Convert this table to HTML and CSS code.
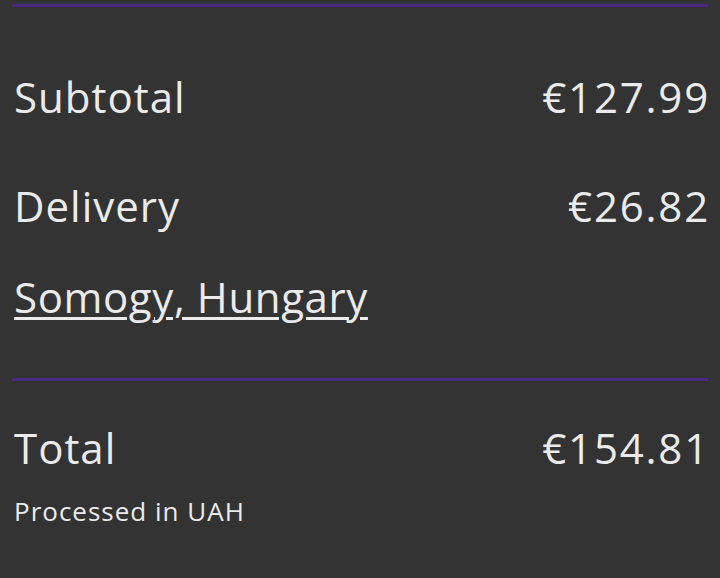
FILE: index.html
```html
<!DOCTYPE html>
<html lang="en">
<head>
<meta charset="utf-8">
<title>Order summary</title>
<link rel="stylesheet" href="styles.css">
</head>
<body>
<section class="summary">
  <div class="rule"></div>
  <div class="row row-subtotal">
    <span class="label">Subtotal</span>
    <span class="amount">€127.99</span>
  </div>
  <div class="row row-delivery">
    <span class="label">Delivery</span>
    <span class="amount">€26.82</span>
  </div>
  <a class="location" href="#">Somogy, Hungary</a>
  <div class="rule rule-mid"></div>
  <div class="row row-total">
    <span class="label">Total</span>
    <span class="amount">€154.81</span>
  </div>
  <p class="note">Processed in UAH</p>
</section>
</body>
</html>
```
FILE: styles.css
```css
html, body {
  margin: 0;
  padding: 0;
  background: #333333;
}
body {
  font-family: "Open Sans", "Noto Sans", sans-serif;
  color: #ebebeb;
}
.summary {
  padding: 4px 12px 0 12px;
  display: flex;
  flex-direction: column;
}
.rule {
  height: 3px;
  background: #4a2a80;
}
.row {
  display: flex;
  justify-content: space-between;
  font-size: 42px;
  line-height: 42px;
  padding-left: 2px;
}
.label {
  letter-spacing: 1px;
}
.amount {
  letter-spacing: 1.8px;
  margin-right: -2px;
}
.row-subtotal { margin-top: 69px; }
.row-delivery { margin-top: 67px; }
.location {
  align-self: flex-start;
  margin-top: 49px;
  margin-left: 2px;
  font-size: 42px;
  line-height: 42px;
  letter-spacing: 0.6px;
  color: #ebebeb;
  text-decoration: underline;
  text-decoration-thickness: 3px;
  text-underline-offset: 4px;
}
.rule-mid { margin-top: 60px; }
.row-total { margin-top: 46px; }
.note {
  margin: 29px 0 0 2px;
  font-size: 26px;
  line-height: 26px;
  letter-spacing: 1px;
}
```
